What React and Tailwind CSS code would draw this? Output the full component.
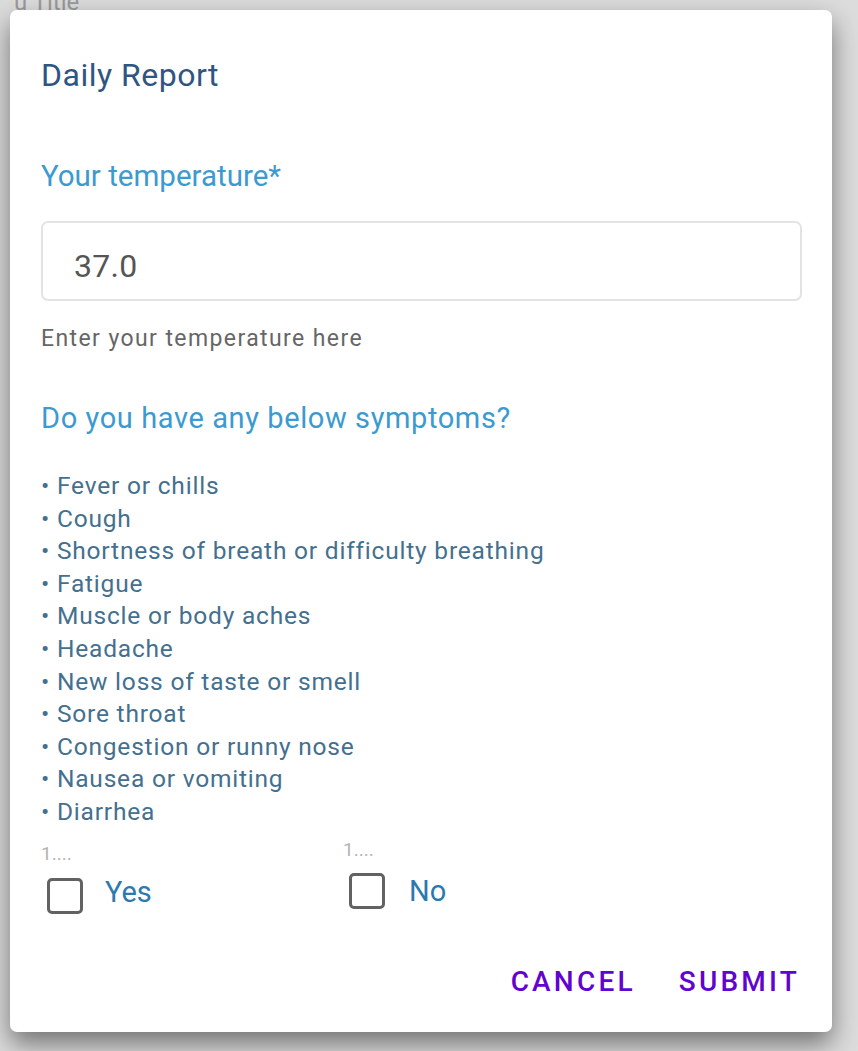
import React from "react";

const symptoms = [
  "Fever or chills",
  "Cough",
  "Shortness of breath or difficulty breathing",
  "Fatigue",
  "Muscle or body aches",
  "Headache",
  "New loss of taste or smell",
  "Sore throat",
  "Congestion or runny nose",
  "Nausea or vomiting",
  "Diarrhea",
];

const Choice = ({ label, hintClass, boxClass, textClass }) => (
  <div className="flex flex-col">
    <span className={`text-[19px] leading-[20px] text-[#b3b3b3] ${hintClass}`}>1....</span>
    <div className={`flex items-start ${boxClass}`}>
      <span className="block shrink-0 w-[36px] h-[36px] border-[3px] border-[#626262] rounded-[5px] bg-white"></span>
      <span className={`text-[29px] leading-[28px] text-[#2b79ae] ${textClass}`}>{label}</span>
    </div>
  </div>
);

const App = () => {
  return (
    <div
      className="relative w-[858px] h-[1051px] overflow-hidden bg-[#dcdcdc]"
      style={{ fontFamily: "Roboto, 'Noto Sans', sans-serif" }}
    >
      {/* titolo della pagina dietro il dialog */}
      <div className="absolute left-[14px] -top-[16px] text-[24px] text-[#9a9a9a]">u Title</div>

      <div className="absolute left-[10px] top-[10px] w-[822px] h-[1022px] bg-white rounded-[7px] shadow-[0_12px_26px_rgba(0,0,0,0.48)] flex flex-col pl-[31px] pr-[30px]">
        <h1 className="mt-[46px] text-[32px] leading-[38px] text-[#2f5683] tracking-[0.5px]">Daily Report</h1>

        <div className="mt-[64px] text-[29.5px] leading-[36px] text-[#3b9ad0]">Your temperature*</div>

        <div className="mt-[27px] h-[80px] border-2 border-[#e3e3e3] rounded-[7px] flex items-center pl-[31px] pt-[9px] text-[32px] text-[#555] tracking-[0.3px]">
          37.0
        </div>

        <div className="mt-[24px] text-[23px] leading-[28px] text-[#666] tracking-[1.4px]">Enter your temperature here</div>

        <div className="mt-[48px] text-[29px] leading-[34px] text-[#3b9ad0] tracking-[0.6px]">Do you have any below symptoms?</div>

        <ul className="mt-[35px] flex flex-col">
          {symptoms.map((s) => (
            <li key={s} className="text-[24.5px] leading-[32.6px] text-[#44708f] tracking-[0.8px]">
              • {s}
            </li>
          ))}
        </ul>

        <div className="mt-[11px] flex">
          <div className="w-[302px]">
            <Choice label="Yes" hintClass="mt-[4px]" boxClass="mt-[14px] ml-[6px]" textClass="ml-[22px]" />
          </div>
          <Choice label="No" hintClass="" boxClass="mt-[13px] ml-[6px]" textClass="ml-[24px] mt-[4px]" />
        </div>

        <div className="mt-[52px] flex justify-end gap-[43px] pr-[2px]">
          <button className="text-[28px] leading-[32px] font-medium tracking-[3.2px] text-[#6203d0]">CANCEL</button>
          <button className="text-[28px] leading-[32px] font-medium tracking-[3.2px] text-[#6203d0]">SUBMIT</button>
        </div>
      </div>
    </div>
  );
};

export default App;
